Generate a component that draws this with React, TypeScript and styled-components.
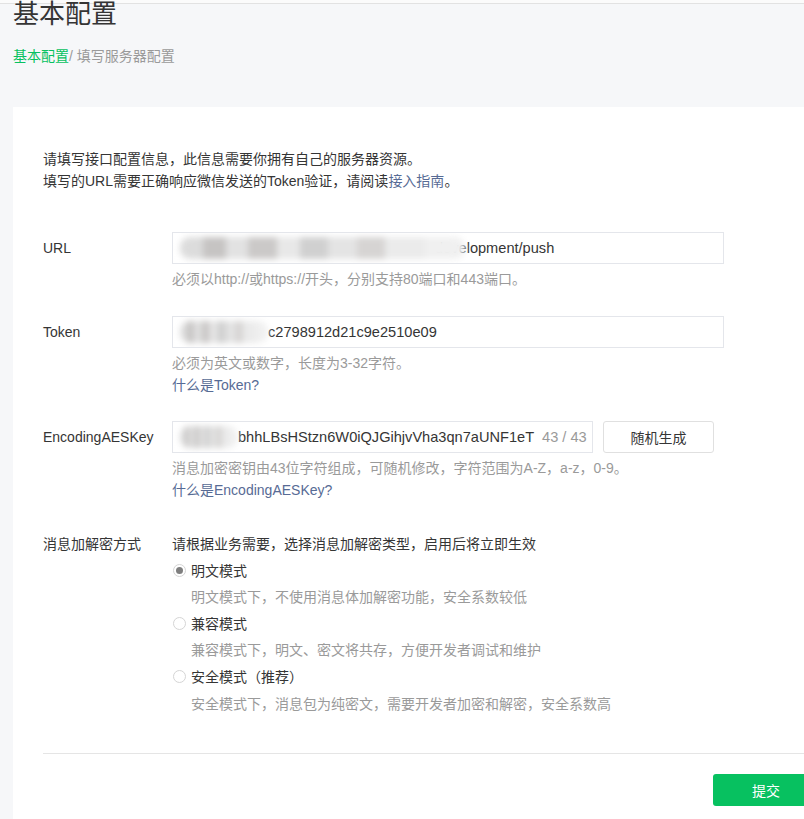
import { Fragment } from 'react';
import styled, { createGlobalStyle } from 'styled-components';

const GlobalStyle = createGlobalStyle`
    html, body {
        margin: 0;
        padding: 0;
        overflow: hidden;
        background: #f6f7f9;
    }
    body {
        font-family: "Liberation Sans", "Noto Sans CJK SC", sans-serif;
        color: #353535;
        font-size: 14px;
    }
`;

const TopBar = styled.div`
    height: 3px;
    background: #fbfbfb;
    border-bottom: 1px solid #e2e2e2;
`;

const Page = styled.div`
    padding-left: 13px;
`;

const Title = styled.h1`
    margin: 0;
    font-size: 26px;
    font-weight: normal;
    line-height: 20px;
    color: #353535;
`;

const Breadcrumb = styled.div`
    margin-top: 21px;
    line-height: 22px;
    color: #9a9a9a;
`;

const Crumb = styled.span`
    color: #07c160;
`;

const Card = styled.section`
    margin-top: 40px;
    width: 850px;
    box-sizing: border-box;
    background: #fff;
    padding: 41px 30px 40px;
    min-height: 760px;
`;

const Intro = styled.p`
    margin: 0;
    line-height: 22px;
`;

const Link = styled.a`
    color: #576b95;
    text-decoration: none;
`;

const Row = styled.div<{ $gap: number }>`
    display: flex;
    margin-top: ${p => p.$gap}px;
`;

const Label = styled.div<{ $top?: number }>`
    width: 129px;
    flex-shrink: 0;
    line-height: 22px;
    padding-top: ${p => p.$top ?? 0}px;
`;

const Field = styled.div`
    display: flex;
    flex-direction: column;
`;

const InputLine = styled.div`
    display: flex;
    gap: 10px;
`;

const Input = styled.div<{ $w: number }>`
    width: ${p => p.$w}px;
    height: 32px;
    box-sizing: border-box;
    border: 1px solid #e4e6eb;
    display: flex;
    align-items: center;
    padding: 0 8px 0 7px;
    font-size: 14.6px;
    color: #353535;
    white-space: nowrap;
    overflow: hidden;
`;

const Blur = styled.span<{ $w: number; $overlap?: number }>`
    display: inline-block;
    position: relative;
    z-index: 1;
    flex-shrink: 0;
    width: ${p => p.$w}px;
    height: 22px;
    margin-right: -${p => p.$overlap ?? 0}px;
    border-radius: 10px;
    filter: blur(3px);
    background: linear-gradient(
        90deg,
        #dcdcdc 0 8%,
        #c6c4c3 8% 16%,
        #e2e2e2 16% 24%,
        #cbc9c8 24% 34%,
        #e8e8e8 34% 42%,
        #d0d0d0 42% 52%,
        #e4e4e4 52% 62%,
        #d6d4d3 62% 72%,
        #ebebeb 72% 86%,
        #f0f0f0 86% 100%
    );
`;

const Counter = styled.span`
    margin-left: auto;
    padding-left: 8px;
    color: #9a9a9a;
`;

const Hint = styled.div`
    margin-top: 4px;
    line-height: 22px;
    color: #9a9a9a;
`;

const HintLink = styled(Link)`
    line-height: 22px;
    display: block;
`;

const GhostButton = styled.button`
    width: 111px;
    height: 32px;
    border: 1px solid #e0e0e0;
    border-radius: 3px;
    background: #fff;
    color: #353535;
    font: inherit;
    font-size: 14px;
`;

const Options = styled.div`
    display: flex;
    flex-direction: column;
    gap: 4.6px;
`;

const Line = styled.div<{ $muted?: boolean; $indent?: boolean }>`
    line-height: 22px;
    color: ${p => (p.$muted ? '#9a9a9a' : '#353535')};
    padding-left: ${p => (p.$indent ? 19 : 0)}px;
`;

const Radio = styled.label`
    display: flex;
    align-items: center;
    gap: 5px;
    padding-left: 1px;
    line-height: 22px;
`;

const Dot = styled.span<{ $on?: boolean }>`
    width: 13px;
    height: 13px;
    box-sizing: border-box;
    border-radius: 50%;
    border: 1px solid #d5d5d5;
    background: #fff;
    display: flex;
    align-items: center;
    justify-content: center;
    &::after {
        content: '';
        width: 7px;
        height: 7px;
        border-radius: 50%;
        background: ${p => (p.$on ? '#7f7f7f' : 'transparent')};
    }
`;

const Divider = styled.hr`
    margin: 38px 0 0;
    border: 0;
    border-top: 1px solid #e5e5e5;
`;

const Footer = styled.div`
    display: flex;
    justify-content: flex-end;
    margin-top: 20px;
`;

const Primary = styled.button`
    width: 120px;
    height: 32px;
    border: 0;
    border-radius: 3px;
    background: #07c160;
    color: #fff;
    font: inherit;
    font-size: 14px;
    padding-right: 20px;
`;

const modes = [
    { name: '明文模式', desc: '明文模式下，不使用消息体加解密功能，安全系数较低', on: true },
    { name: '兼容模式', desc: '兼容模式下，明文、密文将共存，方便开发者调试和维护', on: false },
    { name: '安全模式（推荐）', desc: '安全模式下，消息包为纯密文，需要开发者加密和解密，安全系数高', on: false },
];

export default function App() {
    return (
        <>
            <GlobalStyle />
            <TopBar />
            <Page>
                <Title>基本配置</Title>
                <Breadcrumb>
                    <Crumb>基本配置</Crumb>/ 填写服务器配置
                </Breadcrumb>
                <Card>
                    <Intro>请填写接口配置信息，此信息需要你拥有自己的服务器资源。</Intro>
                    <Intro>
                        填写的URL需要正确响应微信发送的Token验证，请阅读<Link href="#">接入指南</Link>。
                    </Intro>

                    <Row $gap={40}>
                        <Label $top={5}>URL</Label>
                        <Field>
                            <Input $w={552}>
                                <Blur $w={285} $overlap={30} />
                                development/push
                            </Input>
                            <Hint>必须以http://或https://开头，分别支持80端口和443端口。</Hint>
                        </Field>
                    </Row>

                    <Row $gap={26}>
                        <Label $top={5}>Token</Label>
                        <Field>
                            <Input $w={552}>
                                <Blur $w={88} />
                                c2798912d21c9e2510e09
                            </Input>
                            <Hint>必须为英文或数字，长度为3-32字符。</Hint>
                            <HintLink href="#">什么是Token?</HintLink>
                        </Field>
                    </Row>

                    <Row $gap={25}>
                        <Label $top={5}>EncodingAESKey</Label>
                        <Field>
                            <InputLine>
                                <Input $w={421}>
                                    <Blur $w={58} />
                                    bhhLBsHStzn6W0iQJGihjvVha3qn7aUNF1eT
                                    <Counter>43 / 43</Counter>
                                </Input>
                                <GhostButton>随机生成</GhostButton>
                            </InputLine>
                            <Hint>消息加密密钥由43位字符组成，可随机修改，字符范围为A-Z，a-z，0-9。</Hint>
                            <HintLink href="#">什么是EncodingAESKey?</HintLink>
                        </Field>
                    </Row>

                    <Row $gap={32}>
                        <Label>消息加解密方式</Label>
                        <Options>
                            <Line>请根据业务需要，选择消息加解密类型，启用后将立即生效</Line>
                            {modes.map(m => (
                                <Fragment key={m.name}>
                                    <Radio>
                                        <Dot $on={m.on} />
                                        {m.name}
                                    </Radio>
                                    <Line $muted $indent>{m.desc}</Line>
                                </Fragment>
                            ))}
                        </Options>
                    </Row>

                    <Divider />
                    <Footer>
                        <Primary>提交</Primary>
                    </Footer>
                </Card>
            </Page>
        </>
    );
}
